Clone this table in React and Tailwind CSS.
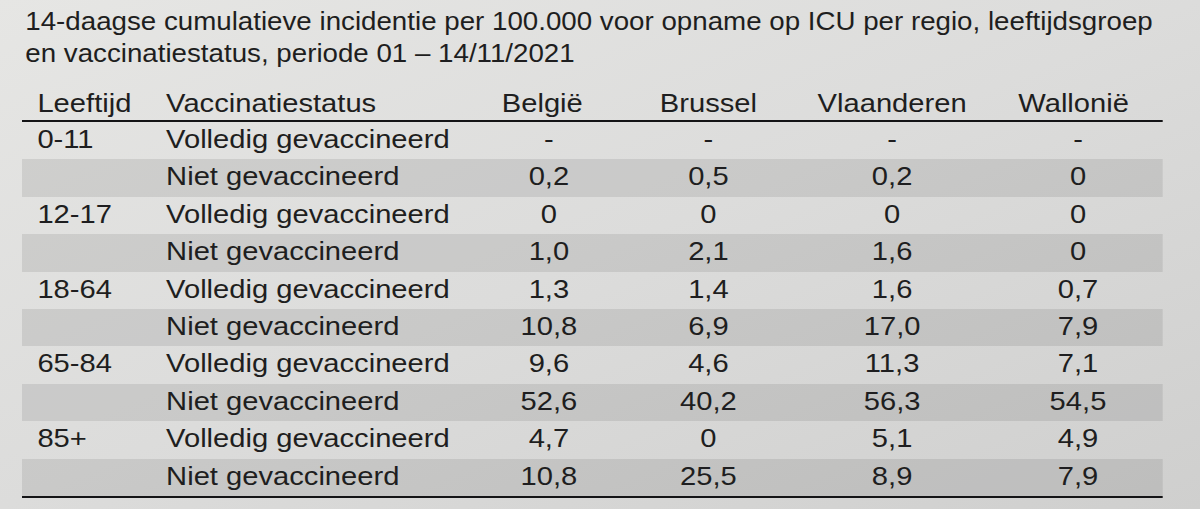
const rows = [
  ["0-11", "Volledig gevaccineerd", "-", "-", "-", "-"],
  ["", "Niet gevaccineerd", "0,2", "0,5", "0,2", "0"],
  ["12-17", "Volledig gevaccineerd", "0", "0", "0", "0"],
  ["", "Niet gevaccineerd", "1,0", "2,1", "1,6", "0"],
  ["18-64", "Volledig gevaccineerd", "1,3", "1,4", "1,6", "0,7"],
  ["", "Niet gevaccineerd", "10,8", "6,9", "17,0", "7,9"],
  ["65-84", "Volledig gevaccineerd", "9,6", "4,6", "11,3", "7,1"],
  ["", "Niet gevaccineerd", "52,6", "40,2", "56,3", "54,5"],
  ["85+", "Volledig gevaccineerd", "4,7", "0", "5,1", "4,9"],
  ["", "Niet gevaccineerd", "10,8", "25,5", "8,9", "7,9"],
];

const cols = "grid grid-cols-[131px_278px_140px_150px_184px_154px]";

export default function App() {
  return (
    <div className="h-[509px] w-full overflow-hidden bg-linear-to-br from-[#e6e6e4] via-[#dcdcdb] to-[#cfcfce] font-['Liberation_Sans',Arial,sans-serif] text-[#1e1e20]">
      <div className="w-[1091px] origin-top-left scale-x-[1.1] pl-[20px] pt-[5px]">
        <h1 className="pl-[3px] text-[25.2px] leading-[32px] font-normal">
          14-daagse cumulatieve incidentie per 100.000 voor opname op ICU per regio, leeftijdsgroep
          <br />
          en vaccinatiestatus, periode 01 – 14/11/2021
        </h1>

        <div className="mt-[16px] w-[1037px] text-[26.5px]">
          <div className={`${cols} h-[37px] items-end border-b-2 border-[#141416] leading-[37px]`}>
            <div className="pl-[14px]">Leeftijd</div>
            <div>Vaccinatiestatus</div>
            <div className="pr-[12px] text-center">België</div>
            <div className="text-center">Brussel</div>
            <div className="text-center">Vlaanderen</div>
            <div className="pr-[8px] text-center">Wallonië</div>
          </div>

          <div className="border-b-2 border-[#141416]">
            {rows.map((r, i) => (
              <div
                key={i}
                className={`${cols} h-[37.4px] leading-[34px] ${i % 2 === 1 ? "bg-black/[0.085]" : ""}`}
              >
                <div className="pl-[14px]">{r[0]}</div>
                <div>{r[1]}</div>
                {r.slice(2).map((v, j) => (
                  <div key={j} className="text-center">
                    {v}
                  </div>
                ))}
              </div>
            ))}
          </div>
        </div>
      </div>
    </div>
  );
}
